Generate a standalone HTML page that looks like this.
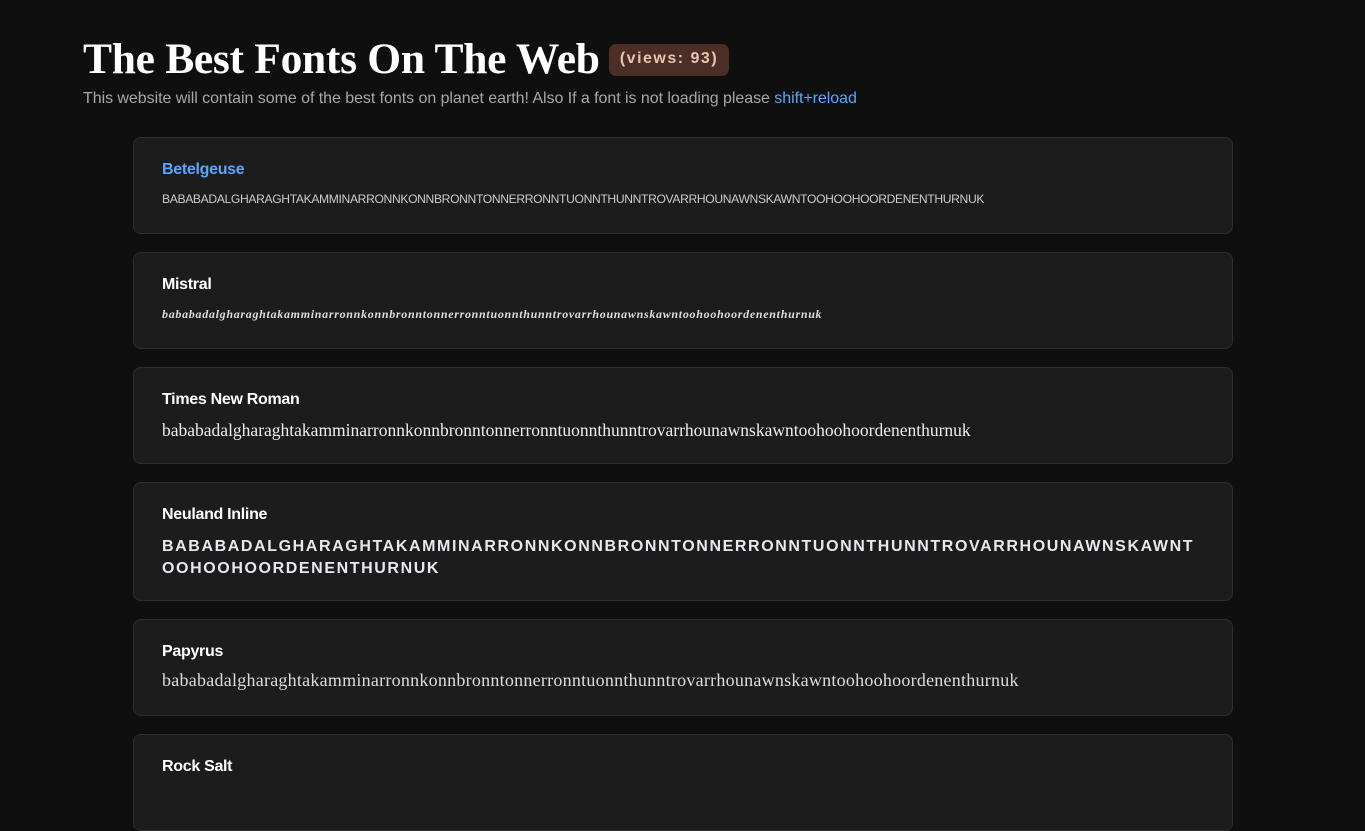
<!DOCTYPE html>
<html><head><meta charset="utf-8"><style>
body{margin:0;background:#0f0f0f;width:1365px;height:767px;overflow:hidden;font-family:"Liberation Sans",sans-serif;color:#eee;position:relative}
h1{position:absolute;left:83px;top:34px;margin:0;font-family:"Liberation Serif",serif;font-weight:bold;font-size:43.5px;color:#fff;letter-spacing:-0.3px}
.badge{position:absolute;left:609px;top:44px;width:120px;height:32px;background:#4b2e26;border-radius:7px;color:#e6c6ae;font-weight:bold;font-size:16px;letter-spacing:1.5px;line-height:30px;text-align:center}
.sub{position:absolute;left:83px;top:90px;font-size:16px;color:#a8a8a8;letter-spacing:-0.05px}
.sub a{color:#58a6ff;text-decoration:none}
.card{position:absolute;left:133px;width:1098px;background:#1c1c1c;border:1px solid #2e2e2e;border-radius:8px}
.t{position:absolute;left:28px;top:23px;font-weight:bold;font-size:16px;color:#fff;letter-spacing:-0.3px}
.s{position:absolute;left:28px;top:52px;white-space:nowrap;color:#ddd}
</style></head><body>
<h1>The Best Fonts On The Web</h1>
<div class="badge">(views: 93)</div>
<div class="sub">This website will contain some of the best fonts on planet earth! Also If a font is not loading please <a>shift+reload</a></div>

<div class="card" style="top:137px;height:95px"><div class="t" style="color:#58a6ff">Betelgeuse</div><div class="s" style="top:54px;font-size:12px;letter-spacing:-0.35px;transform:scaleX(1.01);transform-origin:left;color:#ccc">BABABADALGHARAGHTAKAMMINARRONNKONNBRONNTONNERRONNTUONNTHUNNTROVARRHOUNAWNSKAWNTOOHOOHOORDENENTHURNUK</div></div>

<div class="card" style="top:252px;height:95px"><div class="t">Mistral</div><div class="s" style="top:54px;font-size:12px;font-style:italic;font-weight:bold;letter-spacing:0.7px;font-family:'Liberation Serif',serif">bababadalgharaghtakamminarronnkonnbronntonnerronntuonnthunntrovarrhounawnskawntoohoohoordenenthurnuk</div></div>

<div class="card" style="top:367px;height:95px"><div class="t">Times New Roman</div><div class="s" style="top:52px;font-size:17.5px;font-family:'Liberation Serif',serif;color:#eee">bababadalgharaghtakamminarronnkonnbronntonnerronntuonnthunntrovarrhounawnskawntoohoohoordenenthurnuk</div></div>

<div class="card" style="top:482px;height:117px"><div class="t">Neuland Inline</div><div class="s" style="top:53px;white-space:normal;width:1040px;word-break:break-all;font-size:16px;font-weight:bold;line-height:22px;letter-spacing:1.6px;color:#e8e8f0">BABABADALGHARAGHTAKAMMINARRONNKONNBRONNTONNERRONNTUONNTHUNNTROVARRHOUNAWNSKAWNTOOHOOHOORDENENTHURNUK</div></div>

<div class="card" style="top:619px;height:95px"><div class="t">Papyrus</div><div class="s" style="top:50px;font-size:18px;font-family:'Liberation Serif',serif;letter-spacing:0.25px;color:#ddd">bababadalgharaghtakamminarronnkonnbronntonnerronntuonnthunntrovarrhounawnskawntoohoohoordenenthurnuk</div></div>

<div class="card" style="top:734px;height:95px"><div class="t">Rock Salt</div></div>
</body></html>
